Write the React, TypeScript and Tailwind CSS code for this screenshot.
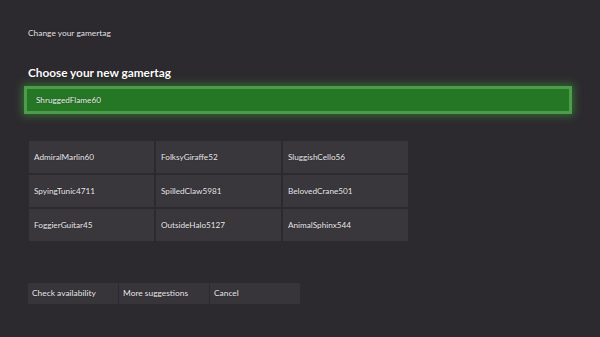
import React from "react";

const names = [
  "AdmiralMarlin60",
  "FolksyGiraffe52",
  "SluggishCello56",
  "SpyingTunic4711",
  "SpilledClaw5981",
  "BelovedCrane501",
  "FoggierGuitar45",
  "OutsideHalo5127",
  "AnimalSphinx544",
];

export default function App() {
  return (
    <div
      className="w-[600px] h-[337px] bg-[#2d2a2f] text-[#ecebee] overflow-hidden flex flex-col [text-shadow:0_0_1px_rgba(0,0,0,0.6)]"
      style={{ fontFamily: 'Lato, "Noto Sans", sans-serif' }}
    >
      <div className="pl-[28px] pt-[27px] text-[8.4px] leading-[12px] text-[#e6e4e8]">
        Change your gamertag
      </div>
      <div className="pl-[28px] pt-[26px] text-[11.8px] leading-[16px] font-bold text-white">
        Choose your new gamertag
      </div>
      <div className="pl-[24px] pt-[5px]">
        <div className="w-[548px] h-[28px] bg-[#257725] border-[3px] border-[#4c9d4a] shadow-[0_0_8px_2px_rgba(60,180,60,0.45)] flex items-center pl-[9px] text-[8.2px] text-[#eef6ee]">
          ShruggedFlame60
        </div>
      </div>
      <div className="pl-[29px] pt-[27px]">
        <div className="grid grid-cols-[125px_125px_125px] auto-rows-[32px] gap-x-[2px] gap-y-[2px] w-fit">
          {names.map((n) => (
            <div key={n} className="bg-[#3a373c] flex items-center pl-[5px] text-[8.2px] text-[#ecebee]">
              {n}
            </div>
          ))}
        </div>
      </div>
      <div className="pl-[28px] pt-[42px] flex gap-[1px]">
        {["Check availability", "More suggestions", "Cancel"].map((b) => (
          <div key={b} className="w-[90px] h-[21px] bg-[#38353a] flex items-center pl-[4px] text-[8.4px] text-[#ecebee]">
            {b}
          </div>
        ))}
      </div>
    </div>
  );
}
